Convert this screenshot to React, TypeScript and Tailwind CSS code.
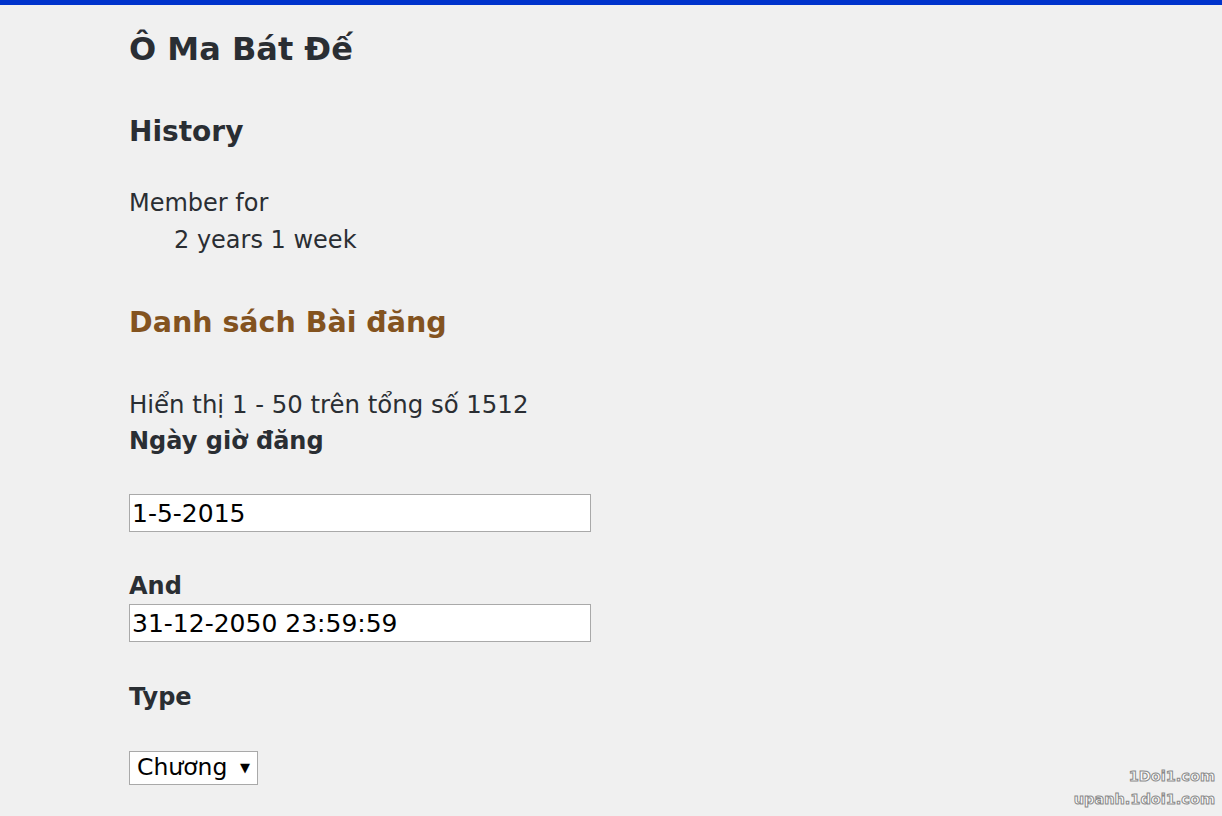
import React from 'react';

const font = { fontFamily: '"DejaVu Sans", Verdana, sans-serif' };

export default function App() {
    return (
        <div className="relative min-h-[816px] bg-[#f0f0f0] text-[#2a2e33] overflow-hidden" style={font}>
            {/* Top bar */}
            <div className="h-[5px] bg-[#0033cc]" />

            <div className="pl-[129px]">
                <h1 className="mt-[24px] text-[32px] leading-[40px] font-bold">Ô Ma Bát Đế</h1>

                <h2 className="mt-[45px] text-[28px] leading-[36px] font-bold">History</h2>

                <dl className="mt-[35px] text-[24px] leading-[37px]">
                    <dt>Member for</dt>
                    <dd className="pl-[45px]">2 years 1 week</dd>
                </dl>

                <h2 className="mt-[46px] text-[28.5px] leading-[36px] font-bold text-[#83531f]">
                    Danh sách Bài đăng
                </h2>

                <p className="mt-[46px] text-[24.4px] leading-[36px]">Hiển thị 1 - 50 trên tổng số 1512</p>

                {/* Filters */}
                <form className="flex flex-col items-start">
                    <label className="text-[24px] leading-[36px] font-bold">Ngày giờ đăng</label>
                    <input
                        type="text"
                        defaultValue="1-5-2015"
                        className="mt-[35px] w-[462px] h-[38px] px-[2px] border border-[#a9a9a9] bg-white text-[25px] text-black outline-none"
                    />

                    <label className="mt-[37px] text-[24px] leading-[35px] font-bold">And</label>
                    <input
                        type="text"
                        defaultValue="31-12-2050 23:59:59"
                        className="w-[462px] h-[38px] px-[2px] border border-[#a9a9a9] bg-white text-[25px] text-black outline-none"
                    />

                    <label className="mt-[37px] text-[24px] leading-[36px] font-bold">Type</label>
                    <div className="mt-[36px] inline-flex items-center w-[129px] h-[34px] border border-[#a9a9a9] bg-white">
                        <select className="appearance-none bg-transparent pl-[7px] pr-[12px] text-[23.5px] text-black outline-none">
                            <option>Chương</option>
                        </select>
                        <span className="pointer-events-none text-[13px] text-black">▼</span>
                    </div>
                </form>
            </div>

            {/* Watermark */}
            <div className="absolute right-[7px] bottom-[5px] flex flex-col items-end text-[14.5px] leading-[23px] font-bold text-white [-webkit-text-stroke:1px_#8a8a8a]">
                <span>1Doi1.com</span>
                <span>upanh.1doi1.com</span>
            </div>
        </div>
    );
}
